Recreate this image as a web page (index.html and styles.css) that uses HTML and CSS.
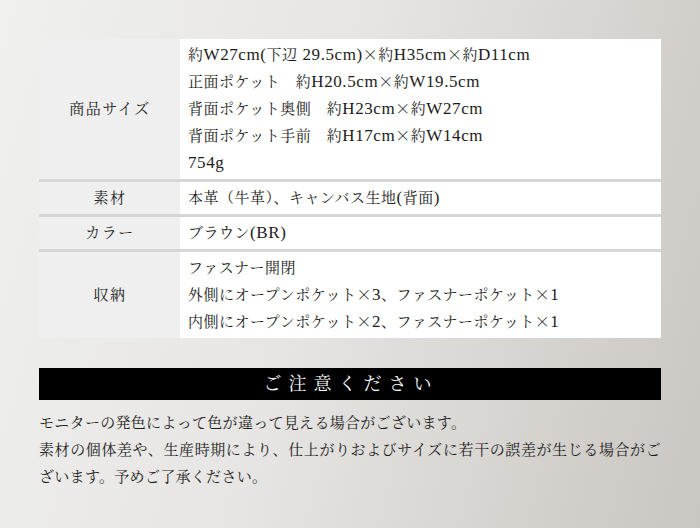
FILE: index.html
```html
<!DOCTYPE html>
<html>

<head>
  <meta charset="utf-8">
  <title>商品詳細</title>
  <link rel="stylesheet" href="styles.css">
</head>

<body>
  <div class="wrap">
    <div class="spec">
      <div class="label">商品サイズ</div>
      <div class="value">
        約<span class="en">W27cm(</span>下辺<span class="en"> 29.5cm)</span><span class="x">×</span>約<span class="en">H35cm</span><span class="x">×</span>約<span class="en">D11cm</span><br>
        正面ポケット　約<span class="en">H20.5cm</span><span class="x">×</span>約<span class="en">W19.5cm</span><br>
        背面ポケット奥側　約<span class="en">H23cm</span><span class="x">×</span>約<span class="en">W27cm</span><br>
        背面ポケット手前　約<span class="en">H17cm</span><span class="x">×</span>約<span class="en">W14cm</span><br>
        <span class="en">754g</span>
      </div>

      <div class="label">素材</div>
      <div class="value">本革（牛革）、キャンバス生地<span class="en">(</span>背面<span class="en">)</span></div>

      <div class="label">カラー</div>
      <div class="value">ブラウン<span class="en">(BR)</span></div>

      <div class="label">収納</div>
      <div class="value">
        ファスナー開閉<br>
        外側にオープンポケット<span class="x">×</span><span class="en">3</span>、ファスナーポケット<span class="x">×</span><span class="en">1</span><br>
        内側にオープンポケット<span class="x">×</span><span class="en">2</span>、ファスナーポケット<span class="x">×</span><span class="en">1</span>
      </div>
    </div>

    <h2 class="notice-title">ご注意ください</h2>
    <p class="notice">
      モニターの発色によって色が違って見える場合がございます。<br>
      素材の個体差や、生産時期により、仕上がりおよびサイズに若干の誤差が生じる場合がございます。予めご了承ください。
    </p>
  </div>
</body>

</html>
```

FILE: styles.css
```css
* {
  box-sizing: border-box;
}

html,
body {
  height: 100%;
}

body {
  margin: 0;
  background: linear-gradient(105deg, #f0f0ef 0%, #e6e5e3 45%, #d4d1cd 80%, #cac7c3 100%);
  color: #1c1c1c;
  font-family: "Liberation Serif", "Noto Serif CJK JP", "Noto Serif JP", "Noto Sans CJK JP", serif;
  font-size: 15px;
  letter-spacing: 0.5px;
}

.wrap {
  width: 622px;
  margin: 0 auto;
  padding-top: 39px;
}

.spec {
  display: grid;
  grid-template-columns: 141px 1fr;
  row-gap: 3px;
  background: #d6d6d6;
  line-height: 27px;
}

.label {
  background: #efefef;
  display: flex;
  align-items: center;
  justify-content: center;
  padding: 3px 0 2px 1px;
  letter-spacing: 1.5px;
}

.value {
  background: #fff;
  padding: 3px 8px 2px;
}

/* latin runs sit a size up, like a mincho's roman */
.en {
  font-size: 17px;
  line-height: 1;
  letter-spacing: 0.6px;
}

.x {
  display: inline-block;
  width: 15px;
  margin-right: 0.5px;
  text-align: center;
  font-family: "Noto Sans CJK JP", sans-serif;
  font-weight: 300;
  line-height: 1;
}

.notice-title {
  margin: 30px 0 0;
  height: 32px;
  background: #000;
  color: #fff;
  font-weight: normal;
  font-size: 18px;
  line-height: 32px;
  letter-spacing: 7px;
  padding-left: 2px;
  text-align: center;
}

.notice {
  margin: 10px 0 0;
  line-height: 27px;
  letter-spacing: 0.3px;
  line-break: anywhere;
  text-align: justify;
}
```
